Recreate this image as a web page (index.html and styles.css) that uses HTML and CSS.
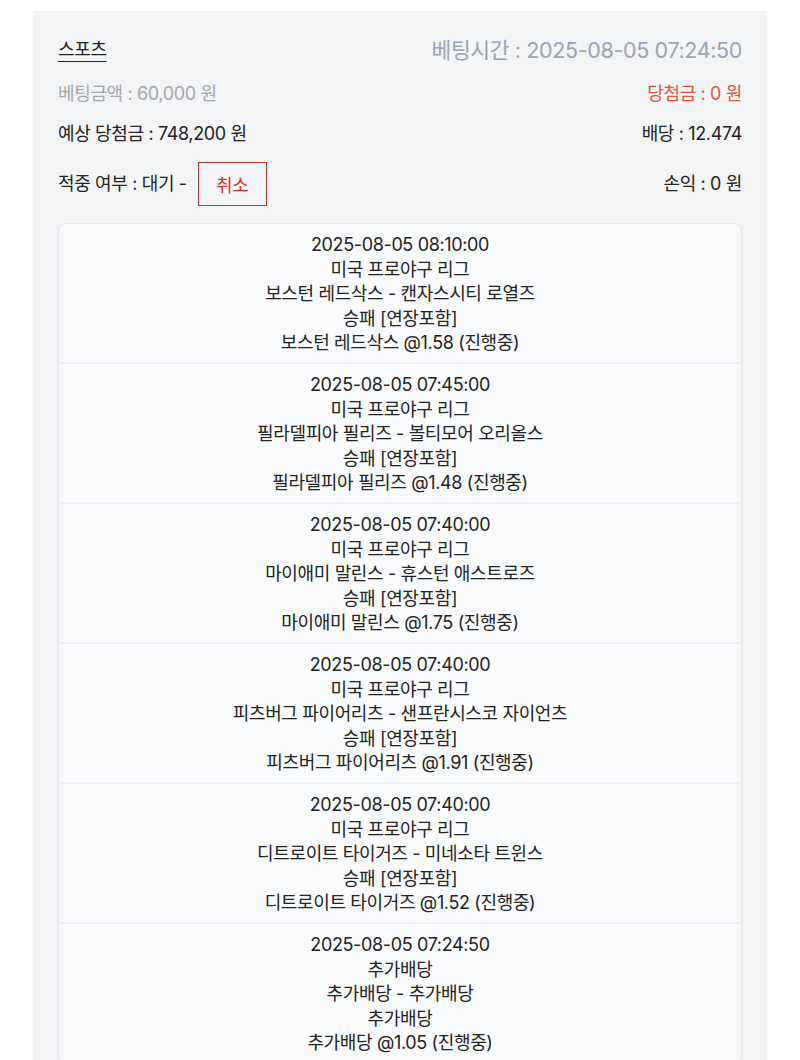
FILE: index.html
```html
<!DOCTYPE html>
<html lang="ko">
<head>
    <meta charset="UTF-8">
    <meta name="viewport" content="width=device-width, initial-scale=1.0">
    <title>베팅내역</title>
    <link rel="stylesheet" href="styles.css">
</head>
<body>
<div class="bet-box">
    <div class="bet-row first">
        <span class="bet-type">스포츠</span>
        <span class="bet-time">베팅시간 : 2025-08-05 07:24:50</span>
    </div>
    <div class="bet-row amount">
        <span class="muted">베팅금액 : 60,000 원</span>
        <span class="win">당첨금 : 0 원</span>
    </div>
    <div class="bet-row">
        <span>예상 당첨금 : 748,200 원</span>
        <span>배당 : 12.474</span>
    </div>
    <div class="bet-row status">
        <span class="status-left">적중 여부 : 대기 - <button class="cancel-btn">취소</button></span>
        <span>손익 : 0 원</span>
    </div>

    <div class="bet-list">
        <div class="bet-item">
            <div>2025-08-05 08:10:00</div>
            <div>미국 프로야구 리그</div>
            <div>보스턴 레드삭스 - 캔자스시티 로열즈</div>
            <div>승패 [연장포함]</div>
            <div>보스턴 레드삭스 @1.58 (진행중)</div>
        </div>
        <div class="bet-item">
            <div>2025-08-05 07:45:00</div>
            <div>미국 프로야구 리그</div>
            <div>필라델피아 필리즈 - 볼티모어 오리올스</div>
            <div>승패 [연장포함]</div>
            <div>필라델피아 필리즈 @1.48 (진행중)</div>
        </div>
        <div class="bet-item">
            <div>2025-08-05 07:40:00</div>
            <div>미국 프로야구 리그</div>
            <div>마이애미 말린스 - 휴스턴 애스트로즈</div>
            <div>승패 [연장포함]</div>
            <div>마이애미 말린스 @1.75 (진행중)</div>
        </div>
        <div class="bet-item">
            <div>2025-08-05 07:40:00</div>
            <div>미국 프로야구 리그</div>
            <div>피츠버그 파이어리츠 - 샌프란시스코 자이언츠</div>
            <div>승패 [연장포함]</div>
            <div>피츠버그 파이어리츠 @1.91 (진행중)</div>
        </div>
        <div class="bet-item">
            <div>2025-08-05 07:40:00</div>
            <div>미국 프로야구 리그</div>
            <div>디트로이트 타이거즈 - 미네소타 트윈스</div>
            <div>승패 [연장포함]</div>
            <div>디트로이트 타이거즈 @1.52 (진행중)</div>
        </div>
        <div class="bet-item">
            <div>2025-08-05 07:24:50</div>
            <div>추가배당</div>
            <div>추가배당 - 추가배당</div>
            <div>추가배당</div>
            <div>추가배당 @1.05 (진행중)</div>
        </div>
    </div>
</div>
</body>
</html>
```

FILE: styles.css
```css
body {
    margin: 0;
    background-color: #ffffff;
    font-family: "Inter", "Noto Sans CJK KR", sans-serif;
    color: #222222;
}
.bet-box {
    margin: 11px 33px 0;
    padding: 26px 25px 0;
    background-color: #f3f4f6;
    min-height: 1100px;
    box-sizing: border-box;
}
.bet-row {
    display: flex;
    justify-content: space-between;
    align-items: center;
    font-size: 18px;
    line-height: 26px;
    letter-spacing: -0.02em;
    margin-top: 14px;
}
.bet-row.first {
    margin-top: 0;
}
.bet-row.amount {
    margin-top: 18px;
}
.bet-row.status {
    margin-top: 15px;
}
.bet-type {
    text-decoration: underline;
    text-underline-offset: 5px;
}
.bet-time {
    font-size: 21.5px;
    color: #9aa3b2;
}
.muted {
    color: #a3a6ab;
}
.win {
    color: #e5533d;
}
.status-left {
    display: flex;
    align-items: center;
}
.cancel-btn {
    margin-left: 11px;
    width: 69px;
    height: 44px;
    background: transparent;
    border: 1.5px solid #d32f2f;
    color: #d32f2f;
    font-family: inherit;
    font-size: 18px;
    letter-spacing: -0.02em;
    padding: 0;
}
.bet-list {
    margin-top: 17px;
    background-color: #f9fafb;
    border: 1px solid #e5e7eb;
    border-radius: 8px;
    box-shadow: 0 1px 2px rgba(0, 0, 0, 0.04);
}
.bet-item {
    height: 140px;
    box-sizing: border-box;
    padding-top: 9px;
    border-bottom: 2px solid #eef0f3;
    text-align: center;
    font-size: 18px;
    line-height: 24.6px;
    letter-spacing: -0.02em;
    color: #222222;
}
```
